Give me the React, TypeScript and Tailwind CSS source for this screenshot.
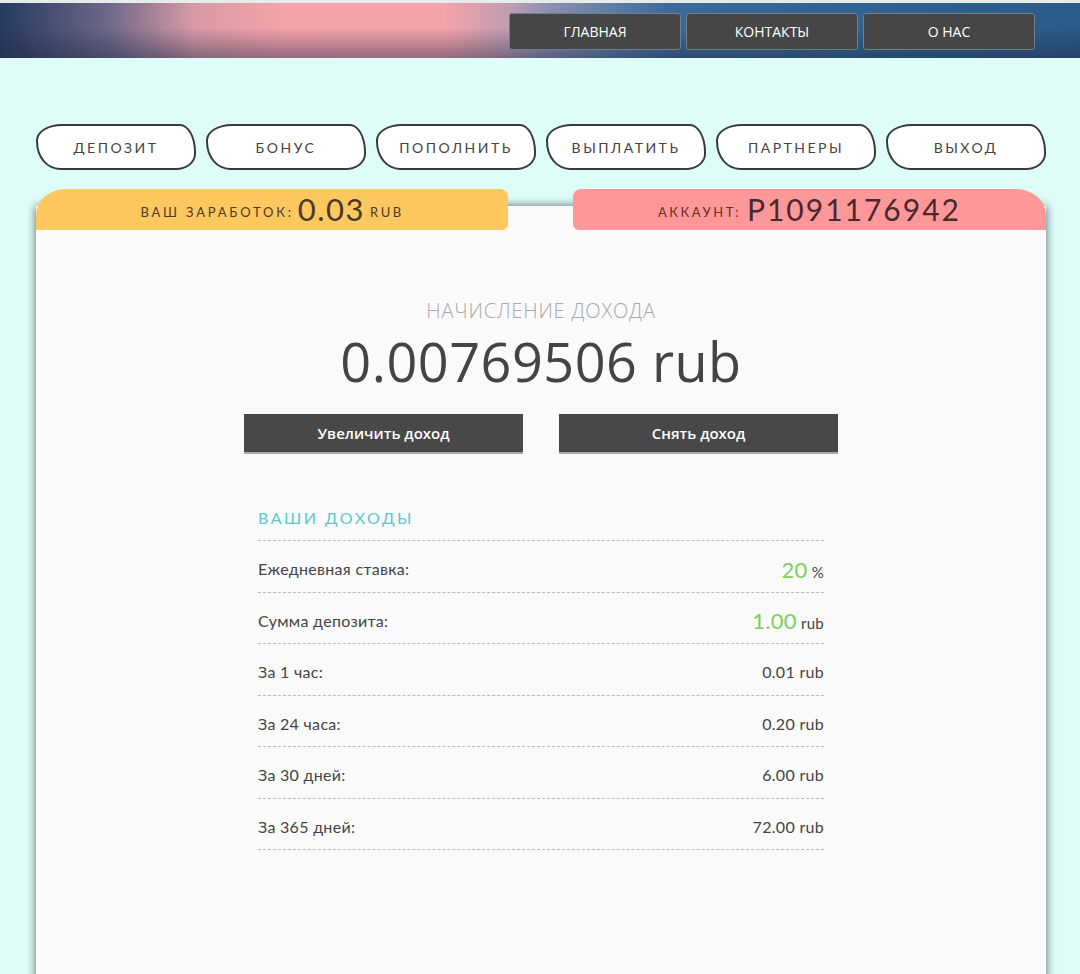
import React from 'react';

const topLinks = ['ГЛАВНАЯ', 'КОНТАКТЫ', 'О НАС'];
const menu = ['ДЕПОЗИТ', 'БОНУС', 'ПОПОЛНИТЬ', 'ВЫПЛАТИТЬ', 'ПАРТНЕРЫ', 'ВЫХОД'];

const rows = [
  { label: 'За 1 час:', value: '0.01' },
  { label: 'За 24 часа:', value: '0.20' },
  { label: 'За 30 дней:', value: '6.00' },
  { label: 'За 365 дней:', value: '72.00' },
];

export default function App() {
  return (
    <div className="min-h-[974px] overflow-hidden bg-[#defcf8] font-['Open_Sans',sans-serif] text-[#444]">
      {/* шапка */}
      <div className="h-[3px] bg-[#e6ecea]" />
      <header className="relative h-[55px] bg-[linear-gradient(to_right,#26395f_0%,#6e6788_10%,#d89aa6_18%,#f5a2a8_26%,#f5a3a9_41%,#c29db0_47%,#8a8fb0_51%,#3a6a9a_62%,#2e6190_85%,#2a5a88_100%)]">
        <div className="absolute inset-0 bg-[linear-gradient(to_bottom,rgba(255,255,255,0)_45%,rgba(30,40,70,0.45)_100%)]" />
        <nav className="relative flex gap-[5px] pl-[509px] pt-[10px]">
          {topLinks.map((l) => (
            <a
              key={l}
              className="flex h-[37px] w-[172px] items-center justify-center rounded-[3px] border border-[#6f7f90] bg-[#464646] text-[14px] text-white"
            >
              {l}
            </a>
          ))}
        </nav>
      </header>

      {/* меню */}
      <div className="flex gap-[10px] pl-[36px] pt-[66px]">
        {menu.map((m) => (
          <button
            key={m}
            className="flex h-[46px] w-[160px] items-center justify-center rounded-[26px_16px_20px_24px/16px_28px_16px_28px] border-[2.5px] border-[#3a3a3a] bg-white font-['Lato',sans-serif] text-[14px] tracking-[2.5px] text-[#444]"
          >
            {m}
          </button>
        ))}
      </div>

      {/* карточка */}
      <div className="relative ml-[36px] mt-[19px] w-[1010px]">
        <div className="absolute left-0 right-0 top-[17px] h-[800px] bg-[#fafafa] shadow-[0_0_9px_rgba(0,0,0,0.6)]" />
        <div className="relative flex justify-between">
          <div className="flex h-[41px] w-[472px] items-end justify-center rounded-[30px_8px_6px_0/26px_8px_6px_0] bg-[#fec85f] pb-[4px] font-['Lato',sans-serif] text-[#4a3a2a]">
            <span className="mb-[4px] text-[13px] tracking-[2.8px]">ВАШ ЗАРАБОТОК:</span>
            <span className="ml-[4px] text-[31px] leading-[34px] tracking-[1.5px]">0.03</span>
            <span className="mb-[4px] ml-[5px] text-[13px] tracking-[2.5px]">RUB</span>
          </div>
          <div className="flex h-[41px] w-[473px] items-end justify-center rounded-[8px_30px_0_6px/8px_26px_0_6px] bg-[#fe9898] pb-[4px] font-['Lato',sans-serif] text-[#4a2830]">
            <span className="mb-[4px] text-[13px] tracking-[2.5px] text-[#6a2a2a]">АККАУНТ:</span>
            <span className="ml-[6px] text-[30px] leading-[34px] tracking-[2px]">P1091176942</span>
          </div>
        </div>

        <div className="relative flex flex-col items-center pt-[66px]">
          <div className="text-[20px] font-light tracking-[0.8px] text-[#a8a8a8]">НАЧИСЛЕНИЕ ДОХОДА</div>
          <div className="mt-[1px] text-[54px] leading-[68px] tracking-[0.5px] text-[#444]">0.00769506 rub</div>
          <div className="mt-[19px] flex gap-[36px]">
            <button className="h-[40px] w-[279px] border-b-2 border-[#aaa] bg-[#484848] text-[15px] font-semibold text-white">
              Увеличить доход
            </button>
            <button className="h-[40px] w-[279px] border-b-2 border-[#aaa] bg-[#484848] text-[15px] font-semibold text-white">
              Снять доход
            </button>
          </div>

          <div className="mt-[52px] w-[566px] font-['Lato',sans-serif]">
            <div className="border-b border-dashed border-[#bbb] pb-[10px] text-[16px] tracking-[2.5px] text-[#5cc8d2]">
              ВАШИ ДОХОДЫ
            </div>
            <div className="flex h-[51.5px] items-center justify-between border-b border-dashed border-[#bbb] pt-[6px] text-[16px] tracking-[0.3px]">
              <span>Ежедневная ставка:</span>
              <span>
                <span className="text-[22px] text-[#7fcf5c]">20</span>
                <span className="ml-[4px] text-[15px]">%</span>
              </span>
            </div>
            <div className="flex h-[51.5px] items-center justify-between border-b border-dashed border-[#bbb] pt-[6px] text-[16px] tracking-[0.3px]">
              <span>Сумма депозита:</span>
              <span>
                <span className="text-[22px] text-[#7fcf5c]">1.00</span>
                <span className="ml-[4px] text-[15px]">rub</span>
              </span>
            </div>
            {rows.map((r) => (
              <div
                key={r.label}
                className="flex h-[51.5px] items-center justify-between border-b border-dashed border-[#bbb] pt-[6px] text-[16px] tracking-[0.3px]"
              >
                <span>{r.label}</span>
                <span>{r.value} rub</span>
              </div>
            ))}
          </div>
        </div>
      </div>
    </div>
  );
}
